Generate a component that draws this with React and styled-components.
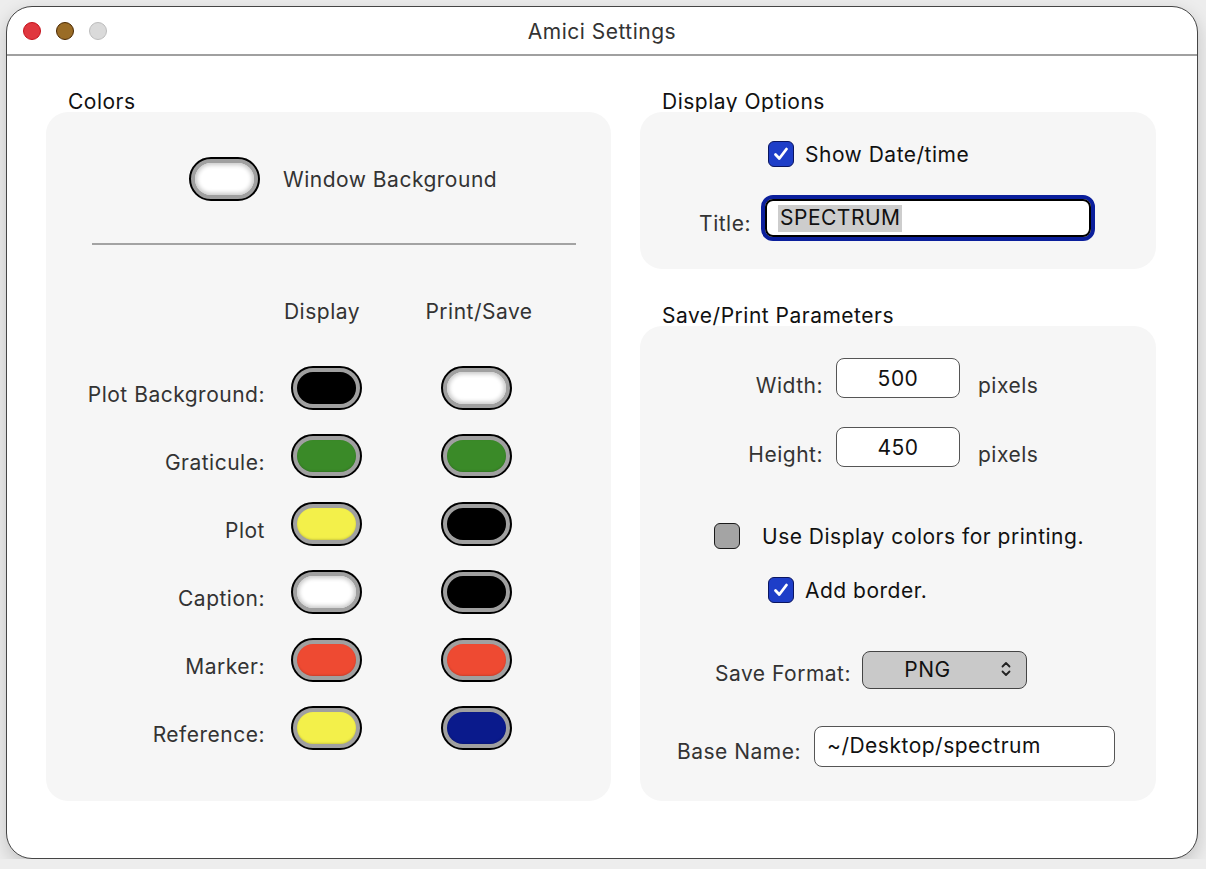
import React from 'react';
import styled, { createGlobalStyle, css } from 'styled-components';

const GlobalStyle = createGlobalStyle`
  html, body {
    margin: 0;
    padding: 0;
    background: #ededed;
  }
  body {
    font-family: Inter, "Noto Sans", "Liberation Sans", sans-serif;
    letter-spacing: 0.5px;
    -webkit-font-smoothing: antialiased;
  }
  #root {
    padding: 6px 0 0 6px;
  }
`;

const Window = styled.div`
  width: 1192px;
  height: 853px;
  box-sizing: border-box;
  background: #fff;
  border: 1.5px solid #454545;
  border-radius: 26px;
  box-shadow: 0 6px 18px rgba(0, 0, 0, 0.18);
  overflow: hidden;
  display: flex;
  flex-direction: column;
`;

const TitleBar = styled.div`
  height: 47px;
  flex-shrink: 0;
  border-bottom: 2px solid #a0a0a0;
  display: flex;
  align-items: center;
  position: relative;
`;

const Lights = styled.div`
  display: flex;
  gap: 15px;
  padding-left: 16px;
  padding-top: 1px;
`;

const Light = styled.span`
  width: 16px;
  height: 16px;
  border-radius: 50%;
  background: ${({ $fill }) => $fill};
  border: 1.5px solid ${({ $ring }) => $ring};
`;

const WindowTitle = styled.div`
  position: absolute;
  left: 0;
  right: 0;
  text-align: center;
  font-size: 21px;
  color: #333;
  top: 12px;
`;

const Content = styled.div`
  display: flex;
  gap: 29px;
  padding: 35px 40px 0 39px;
`;

const Column = styled.div`
  width: ${({ $w }) => $w}px;
  display: flex;
  flex-direction: column;
`;

const SectionLabel = styled.div`
  font-size: 21px;
  line-height: 22px;
  color: #111;
  padding-left: 22px;
  margin-bottom: -1px;
  margin-top: ${({ $top }) => $top || 0}px;
`;

const Panel = styled.div`
  background: #f6f6f6;
  border-radius: 22px;
  height: ${({ $h }) => $h}px;
  box-sizing: border-box;
  padding-top: ${({ $pt }) => $pt}px;
  display: flex;
  flex-direction: column;
`;

/* colour swatches */
const Swatch = styled.span`
  display: block;
  width: 71px;
  height: 44px;
  box-sizing: border-box;
  border-radius: 22px;
  border: 2px solid #000;
  background: #a0a0a0;
  padding: 4px;
  &::after {
    content: '';
    display: block;
    height: 100%;
    border-radius: 18px;
    background: ${({ $c }) => $c};
    ${({ $c }) =>
      $c === '#ffffff'
        ? css`box-shadow: inset 0 0 4px 2px #c8c8c8;`
        : css`box-shadow: inset 0 -1px 2px rgba(0, 0, 0, 0.15);`}
  }
`;

const WinBgRow = styled.div`
  display: flex;
  align-items: center;
  gap: 23px;
  padding-left: 143px;
  font-size: 21px;
  color: #333;
`;

const Rule = styled.div`
  height: 2px;
  background: #a3a3a3;
  margin: 42px 35px 0 46px;
`;

const ColorGrid = styled.div`
  display: grid;
  grid-template-columns: 219px 122px 178px;
  row-gap: 24px;
  align-items: center;
  justify-items: center;
  margin-top: 55px;
`;

const ColHead = styled.div`
  font-size: 21px;
  line-height: 24px;
  color: #333;
  margin-bottom: 18px;
  transform: translateX(${({ $dx }) => $dx || 0}px);
`;

const RowLabel = styled.div`
  justify-self: end;
  font-size: 21px;
  color: #333;
  padding-top: 12px;
`;

/* right-hand controls */
const CheckRow = styled.div`
  display: flex;
  align-items: center;
  gap: ${({ $gap }) => $gap}px;
  padding-left: ${({ $indent }) => $indent}px;
  margin-top: ${({ $top }) => $top || 0}px;
  font-size: 21px;
  color: #111;
`;

const Box = styled.span`
  width: 26px;
  height: 26px;
  box-sizing: border-box;
  border-radius: 6px;
  display: flex;
  align-items: center;
  justify-content: center;
  ${({ $on }) =>
    $on
      ? css`
          background: #1e3ec8;
          border: 1.5px solid #0a1560;
        `
      : css`
          background: #a4a4a4;
          border: 1.5px solid #1a1a1a;
        `}
`;

const FieldRow = styled.div`
  display: flex;
  align-items: center;
  margin-top: ${({ $top }) => $top || 0}px;
  font-size: 21px;
`;

const FieldLabel = styled.div`
  width: ${({ $end }) => $end}px;
  text-align: right;
  color: #333;
  line-height: 25px;
  padding-top: ${({ $drop }) => $drop || 0}px;
  margin-right: ${({ $gap }) => $gap}px;
  flex-shrink: 0;
`;

const TextField = styled.div`
  width: ${({ $w }) => $w}px;
  height: ${({ $h }) => $h}px;
  box-sizing: border-box;
  background: #fff;
  border: 1.5px solid #555;
  border-radius: 8px;
  display: flex;
  align-items: center;
  justify-content: ${({ $center }) => ($center ? 'center' : 'flex-start')};
  padding: ${({ $center }) => ($center ? '0' : '0 0 2px 12px')};
  color: #111;
`;

const FocusField = styled.div`
  width: 334px;
  height: 46px;
  box-sizing: border-box;
  border-radius: 12px;
  border: 4px solid #0b1f9c;
  display: flex;
`;

const FocusInner = styled.div`
  flex: 1;
  border: 2px solid #000;
  border-radius: 8px;
  background: #fff;
  display: flex;
  align-items: center;
  padding-left: 11px;
`;

const Selected = styled.span`
  background: #cdcdcd;
  color: #111;
  padding: 1px 1px 2px 2px;
  line-height: 24px;
`;

const Units = styled.span`
  margin-left: 18px;
  color: #333;
  line-height: 25px;
  padding-top: 14px;
`;

const Popup = styled.div`
  width: 165px;
  height: 38px;
  box-sizing: border-box;
  background: #c9c9c9;
  border: 1.5px solid #444;
  border-radius: 8px;
  display: flex;
  align-items: center;
  padding: 0 14px 2px 0;
  color: #111;
`;

const PopupText = styled.span`
  flex: 1;
  text-align: center;
  padding-right: 8px;
`;

const Check = () => (
  <svg width="18" height="18" viewBox="0 0 18 18">
    <path d="M3.5 9.5 L7.3 13.5 L14.5 4" fill="none" stroke="#fff" strokeWidth="2.8" strokeLinecap="round" strokeLinejoin="round" />
  </svg>
);

const Chevrons = () => (
  <svg width="12" height="18" viewBox="0 0 12 18">
    <path d="M2.5 6.5 L6 3 L9.5 6.5 M2.5 11.5 L6 15 L9.5 11.5" fill="none" stroke="#222" strokeWidth="1.8" strokeLinecap="round" strokeLinejoin="round" />
  </svg>
);

const colorRows = [
  { label: 'Plot Background:', display: '#000000', print: '#ffffff' },
  { label: 'Graticule:', display: '#3a8a28', print: '#3a8a28' },
  { label: 'Plot', display: '#f3f04a', print: '#000000' },
  { label: 'Caption:', display: '#ffffff', print: '#000000' },
  { label: 'Marker:', display: '#ee4a32', print: '#ee4a32' },
  { label: 'Reference:', display: '#f3f04a', print: '#0a1a8c' },
];

const App = () => (
  <>
    <GlobalStyle />
    <Window>
      <TitleBar>
        <Lights>
          <Light $fill="#e0373f" $ring="#c4121c" />
          <Light $fill="#9a6c26" $ring="#4a2800" />
          <Light $fill="#dadada" $ring="#bcbcbc" />
        </Lights>
        <WindowTitle>Amici Settings</WindowTitle>
      </TitleBar>

      <Content>
        <Column $w={565}>
          <SectionLabel>Colors</SectionLabel>
          <Panel $h={689} $pt={45}>
            <WinBgRow>
              <Swatch $c="#ffffff" />
              Window Background
            </WinBgRow>
            <Rule />
            <ColorGrid>
              <span />
              <ColHead $dx={-4}>Display</ColHead>
              <ColHead $dx={3}>Print/Save</ColHead>
              {colorRows.map((r) => (
                <React.Fragment key={r.label}>
                  <RowLabel>{r.label}</RowLabel>
                  <Swatch $c={r.display} />
                  <Swatch $c={r.print} />
                </React.Fragment>
              ))}
            </ColorGrid>
          </Panel>
        </Column>

        <Column $w={516}>
          <SectionLabel>Display Options</SectionLabel>
          <Panel $h={157} $pt={29}>
            <CheckRow $indent={128} $gap={11}>
              <Box $on><Check /></Box>
              Show Date/time
            </CheckRow>
            <FieldRow $top={28}>
              <FieldLabel $end={111} $gap={10} $drop={10}>Title:</FieldLabel>
              <FocusField>
                <FocusInner>
                  <Selected>SPECTRUM</Selected>
                </FocusInner>
              </FocusField>
            </FieldRow>
          </Panel>

          <SectionLabel $top={36}>Save/Print Parameters</SectionLabel>
          <Panel $h={475} $pt={32}>
            <FieldRow>
              <FieldLabel $end={183} $gap={13} $drop={14}>Width:</FieldLabel>
              <TextField $w={124} $h={40} $center>500</TextField>
              <Units>pixels</Units>
            </FieldRow>
            <FieldRow $top={29}>
              <FieldLabel $end={183} $gap={13} $drop={14}>Height:</FieldLabel>
              <TextField $w={124} $h={40} $center>450</TextField>
              <Units>pixels</Units>
            </FieldRow>
            <CheckRow $indent={74} $gap={22} $top={56}>
              <Box />
              Use Display colors for printing.
            </CheckRow>
            <CheckRow $indent={128} $gap={11} $top={28}>
              <Box $on><Check /></Box>
              Add border.
            </CheckRow>
            <FieldRow $top={48}>
              <FieldLabel $end={211} $gap={11} $drop={6}>Save Format:</FieldLabel>
              <Popup>
                <PopupText>PNG</PopupText>
                <Chevrons />
              </Popup>
            </FieldRow>
            <FieldRow $top={37}>
              <FieldLabel $end={161} $gap={13} $drop={10}>Base Name:</FieldLabel>
              <TextField $w={301} $h={41}>~/Desktop/spectrum</TextField>
            </FieldRow>
          </Panel>
        </Column>
      </Content>
    </Window>
  </>
);

export default App;
